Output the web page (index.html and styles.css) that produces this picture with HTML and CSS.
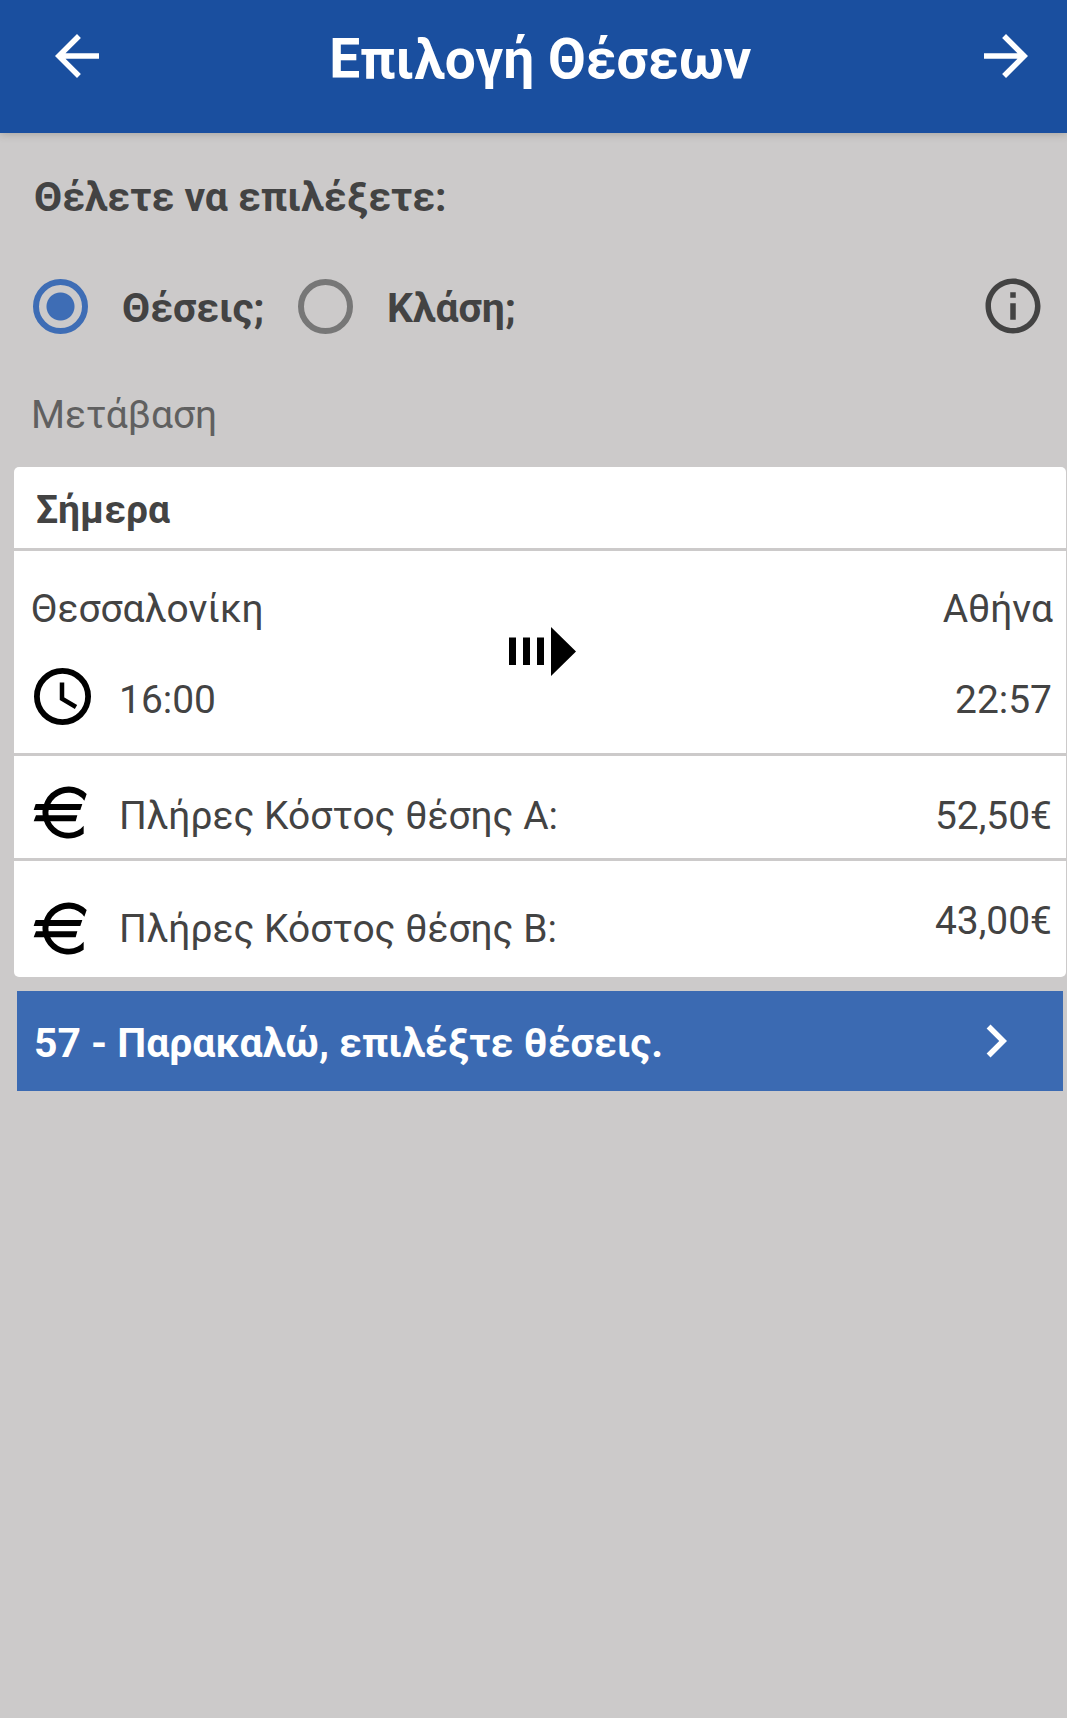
FILE: index.html
```html
<!DOCTYPE html>
<html lang="el">
<head>
<meta charset="utf-8">
<title>Επιλογή Θέσεων</title>
<link rel="stylesheet" href="styles.css">
</head>
<body>
<header class="bar">
  <svg class="icon" viewBox="0 0 24 24"><path d="M20 11H7.83l5.59-5.59L12 4l-8 8 8 8 1.41-1.41L7.83 13H20z"/></svg>
  <h1 class="bar-title">Επιλογή Θέσεων</h1>
  <svg class="icon" viewBox="0 0 24 24"><path d="M12 4l-1.41 1.41L16.17 11H4v2h12.17l-5.58 5.59L12 20l8-8z"/></svg>
</header>
<main>
  <p class="question">Θέλετε να επιλέξετε:</p>
  <div class="options">
    <span class="radio radio-on"></span><span class="option-label seats">Θέσεις;</span>
    <span class="radio"></span><span class="option-label">Κλάση;</span>
    <svg class="icon info" viewBox="0 0 24 24"><path d="M11 7h2v2h-2zm0 4h2v6h-2zm1-9C6.48 2 2 6.48 2 12s4.48 10 10 10 10-4.48 10-10S17.52 2 12 2zm0 18c-4.41 0-8-3.59-8-8s3.59-8 8-8 8 3.59 8 8-3.59 8-8 8z"/></svg>
  </div>
  <p class="direction">Μετάβαση</p>
  <section class="card">
    <h2 class="day">Σήμερα</h2>
    <div class="trip">
      <div class="stop">
        <span class="city">Θεσσαλονίκη</span>
        <span class="time"><svg class="clock" viewBox="0 0 57 57"><circle cx="28.5" cy="28.5" r="25.6"/><path d="M28 14.5v16.2l14 8.3" stroke-width="4.5"/></svg><span class="hour">16:00</span></span>
      </div>
      <svg class="train" viewBox="0 0 67 49"><path d="M0 10.5h7v27.5H0zM14 10.5h7v27.5h-7zM28 10.5h7v27.5h-7zM42 0l25 24.5L42 49z"/></svg>
      <div class="stop stop-end">
        <span class="city">Αθήνα</span>
        <span class="time"><span class="hour">22:57</span></span>
      </div>
    </div>
    <div class="fare fare-a">
      <svg class="euro" viewBox="0 0 165 165"><path d="M161 27A78 78 0 1 0 152 146V122A60 60 0 1 1 154 47z"/><path d="M8 57H148L142 75H2zM9 91H133L128 109H2z"/></svg>
      <span class="fare-name">Πλήρες Κόστος θέσης Α:</span>
      <span class="price">52,50€</span>
    </div>
    <div class="fare fare-b">
      <svg class="euro" viewBox="0 0 165 165"><path d="M161 27A78 78 0 1 0 152 146V122A60 60 0 1 1 154 47z"/><path d="M8 57H148L142 75H2zM9 91H133L128 109H2z"/></svg>
      <span class="fare-name">Πλήρες Κόστος θέσης Β:</span>
      <span class="price">43,00€</span>
    </div>
  </section>
  <div class="choose">
    <span class="choose-text">57 - Παρακαλώ, επιλέξτε θέσεις.</span>
    <svg class="icon" viewBox="0 0 24 24"><path d="M10 6 8.59 7.41 13.17 12l-4.58 4.59L10 18l6-6z"/></svg>
  </div>
</main>
</body>
</html>
```

FILE: styles.css
```css
* { box-sizing: border-box; }
body {
  margin: 0;
  min-height: 1718px;
  background: #cccaca;
  color: #434343;
  font: 38.95px/46px Roboto, "Noto Sans", sans-serif;
}
h1, h2, p { margin: 0; }
svg { display: block; flex: none; fill: currentColor; }
.icon { width: 66px; height: 66px; }
.bar {
  display: flex;
  justify-content: space-between;
  align-items: flex-start;
  height: 133px;
  padding: 23px 28px 0 44px;
  background: #1a4f9f;
  color: #fff;
  box-shadow: 0 1px 8px rgba(80, 75, 60, .3);
}
.bar-title { margin-left: -2.5px; font-size: 55px; line-height: 66px; font-weight: 700; padding-top: 3px; }
.question {
  padding: 37px 34px 0;
  font-size: 40.9px;
  line-height: 54px;
  font-weight: 700;
}
.options {
  display: flex;
  align-items: center;
  height: 66px;
  margin-top: 49px;
  padding: 0 21px 0 33px;
}
.radio {
  flex: none;
  width: 55px;
  height: 55px;
  margin-right: 1px;
  border: 6px solid #777;
  border-radius: 50%;
}
.radio-on {
  border-color: #3e6db5;
  background: radial-gradient(circle, #3e6db5 13.5px, transparent 14.5px);
}
.option-label { margin-left: 33px; padding-top: 4px; font-size: 40.9px; font-weight: 700; }
.seats { width: 143px; margin-right: 33px; }
.info { margin-left: auto; }
.direction { padding: 53px 31px 0; color: #606060; }
.card {
  margin: 29px 1px 0 14px;
  border-radius: 5px;
  background: #fff;
}
.day { height: 84px; padding: 20px 22px 0; font-size: 39px; font-weight: 700; border-bottom: 3px solid #cccaca; }
.trip {
  display: flex;
  justify-content: space-between;
  height: 205px;
  padding: 35px 13px 0 17px;
  border-bottom: 3px solid #cccaca;
}
.stop { display: flex; flex-direction: column; gap: 36px; width: 477px; }
.stop-end { align-items: flex-end; }
.time { display: flex; align-items: center; height: 57px; }
.hour { padding-top: 6px; }
.stop-end .hour { padding-right: 1px; }
.clock { width: 57px; height: 57px; margin: 0 28px 0 3px; fill: none; stroke: #000; stroke-width: 5.8; }
.train { width: 67px; height: 49px; margin-top: 41px; color: #000; }
.fare { display: flex; align-items: flex-start; padding: 0 14px 0 19px; }
.fare-a { height: 105px; padding-top: 29px; border-bottom: 3px solid #cccaca; }
.fare-b { height: 116px; padding-top: 37px; }
.euro { width: 55px; height: 55px; color: #000; }
.fare-name { flex: 1; margin-left: 31px; padding-top: 8px; }
.price { padding-top: 8px; }
.fare-b .price { padding-top: 0; }
.fare-b .euro { margin-top: 3px; }
.choose {
  display: flex;
  align-items: center;
  justify-content: space-between;
  height: 100px;
  margin: 14px 4px 0 17px;
  padding: 0 34px 0 17px;
  background: #3b6ab2;
  color: #fff;
  font-size: 40.9px;
  font-weight: 700;
}
.choose-text { padding-top: 4px; }
```
